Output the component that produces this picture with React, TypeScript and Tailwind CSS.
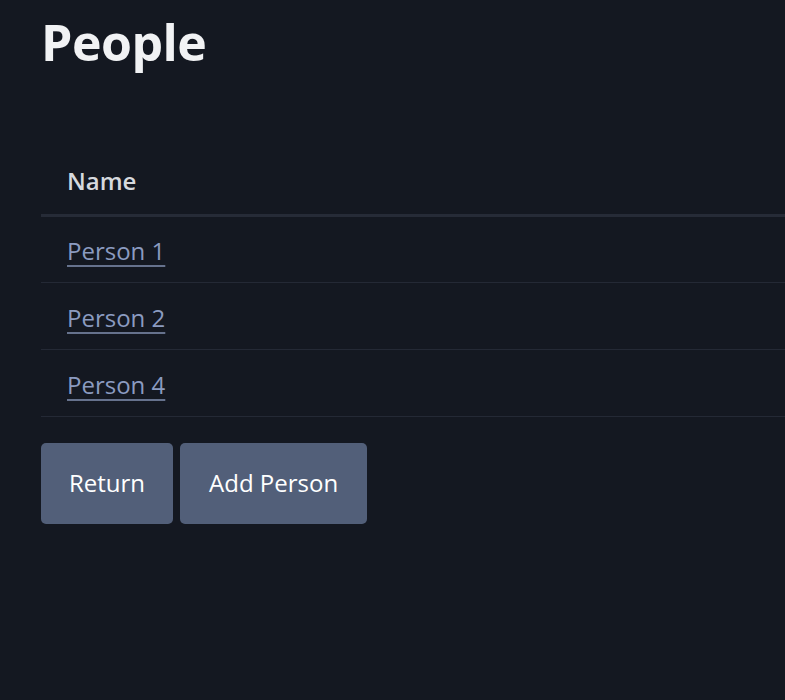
const people = ["Person 1", "Person 2", "Person 4"];

export default function App() {
  return (
    <div className="min-h-[700px] bg-[#141821] pl-[41px] font-['Open_Sans',sans-serif] text-[#f1f2f4]">
      <h1 className="pt-[6px] text-[50px] font-bold leading-[72px] tracking-[-0.5px]">People</h1>
      <table className="mt-[71px] w-full border-collapse text-left">
        <thead>
          <tr className="border-b-[3px] border-[#262b37]">
            <th className="h-[66px] px-[26px] text-[24px] font-semibold text-[#d6d9de]">Name</th>
          </tr>
        </thead>
        <tbody>
          {people.map((name) => (
            <tr key={name} className="border-b border-[#242935]">
              <td className="h-[67px] px-[26px] pt-[4px] text-[24px]">
                <a href="#" className="text-[#8b9bc0] underline decoration-[#66728d] decoration-2 underline-offset-[5px]">
                  {name}
                </a>
              </td>
            </tr>
          ))}
        </tbody>
      </table>
      <div className="mt-[26px] flex gap-[7px]">
        <button className="h-[81px] rounded-[5px] bg-[#525f79] px-[28px] text-[24px] text-white">Return</button>
        <button className="h-[81px] rounded-[5px] bg-[#525f79] px-[29px] text-[24px] text-white">Add Person</button>
      </div>
    </div>
  );
}
